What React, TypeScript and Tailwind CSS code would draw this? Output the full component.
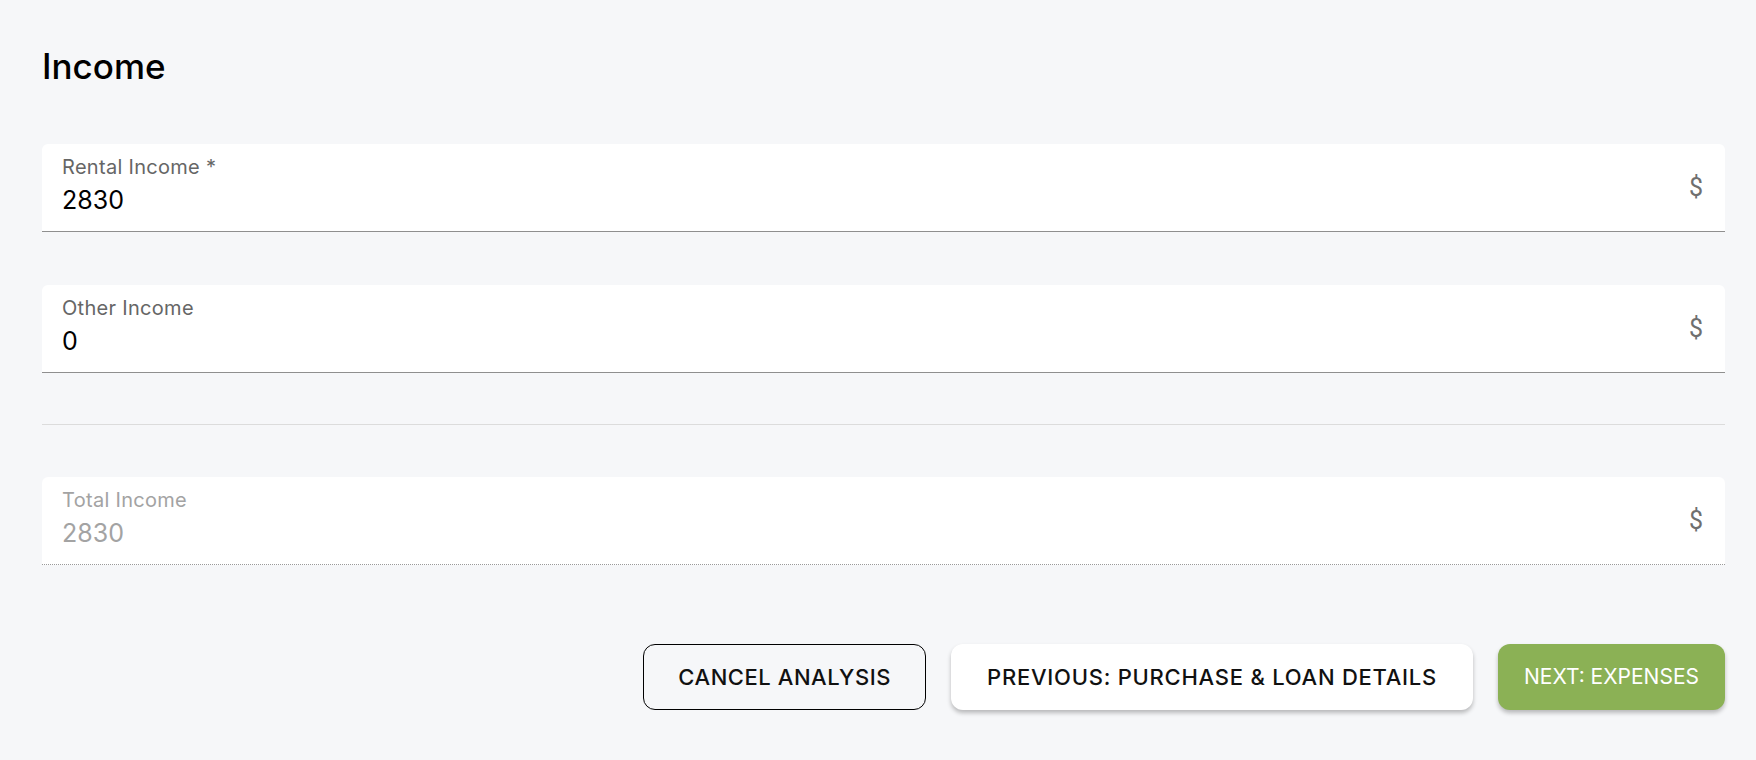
import React from 'react';

interface FieldProps {
  label: string;
  value: string;
  disabled?: boolean;
}

const MoneyField = ({ label, value, disabled }: FieldProps) => (
  <div
    className={`flex h-[88px] items-center rounded-t-[6px] bg-white pl-[20px] pr-[22px] border-b ${
      disabled ? 'border-dotted border-[#9a9a9a]' : 'border-[#8f8f8f]'
    }`}
  >
    <div className="flex flex-1 flex-col self-start pt-[11px]">
      <span
        className={`text-[20px] leading-[24px] tracking-[0.3px] ${disabled ? 'text-[#a3a3a3]' : 'text-[#666666]'}`}
      >
        {label}
      </span>
      <span className={`mt-[5px] text-[25px] leading-[32px] ${disabled ? 'text-[#a3a3a3]' : 'text-black'}`}>
        {value}
      </span>
    </div>
    <span className="font-['Roboto',sans-serif] text-[25px] text-[#6f6f6f]">$</span>
  </div>
);

export default function App() {
  return (
    <div className="min-h-screen bg-[#f6f7f9] pl-[42px] pr-[31px] pt-[41px] font-['Inter',sans-serif]">
      <h2 className="text-[35px] leading-[50px] font-medium text-black">Income</h2>

      <div className="mt-[53px] flex flex-col">
        <MoneyField label="Rental Income *" value="2830" />
        <div className="h-[53px]" />
        <MoneyField label="Other Income" value="0" />
        <div className="h-[52px] border-b border-[#dcdcdc]" />
        <div className="h-[52px]" />
        <MoneyField label="Total Income" value="2830" disabled />
      </div>

      <div className="mt-[79px] flex justify-end gap-[25px]">
        <button className="h-[66px] rounded-[12px] border border-black px-[34px] text-[22px] font-medium tracking-[0.55px] text-[#111]">
          CANCEL ANALYSIS
        </button>
        <button className="h-[66px] rounded-[12px] bg-white px-[36px] text-[22px] font-medium tracking-[0.75px] text-[#111] shadow-[0_3px_4px_rgba(0,0,0,0.25)]">
          PREVIOUS: PURCHASE &amp; LOAN DETAILS
        </button>
        <button className="h-[66px] rounded-[12px] bg-[#8bb155] px-[26px] text-[21px] tracking-[0px] text-white shadow-[0_3px_4px_rgba(0,0,0,0.25)]">
          NEXT: EXPENSES
        </button>
      </div>
    </div>
  );
}
